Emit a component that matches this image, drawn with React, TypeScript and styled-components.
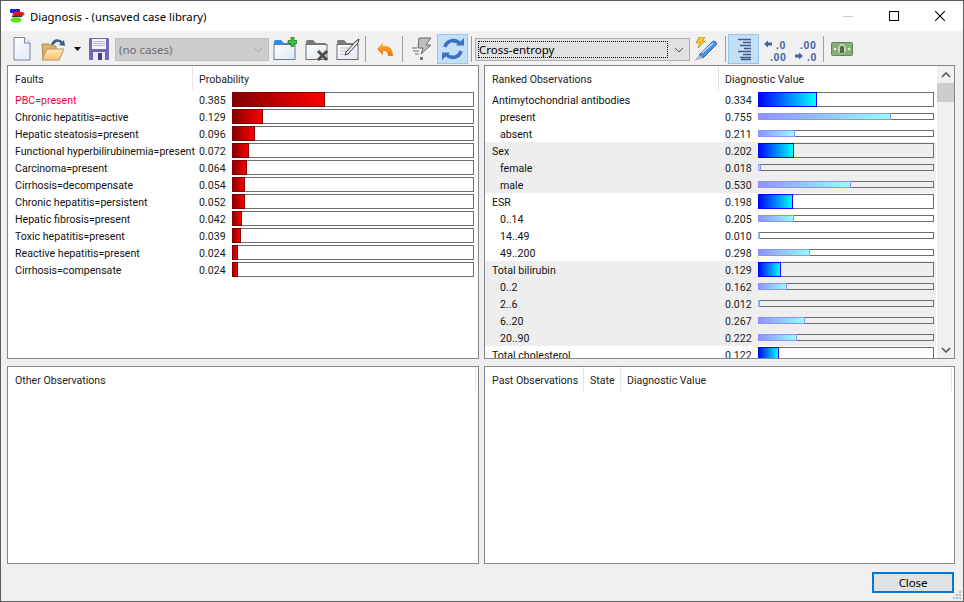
import React from 'react';
import styled, { createGlobalStyle } from 'styled-components';

interface Fault {
  label: string;
  value: number;
}

interface Observation {
  label: string;
  value: number;
  states: Fault[];
}

const faults: Fault[] = [
  { label: 'PBC=present', value: 0.385 },
  { label: 'Chronic hepatitis=active', value: 0.129 },
  { label: 'Hepatic steatosis=present', value: 0.096 },
  { label: 'Functional hyperbilirubinemia=present', value: 0.072 },
  { label: 'Carcinoma=present', value: 0.064 },
  { label: 'Cirrhosis=decompensate', value: 0.054 },
  { label: 'Chronic hepatitis=persistent', value: 0.052 },
  { label: 'Hepatic fibrosis=present', value: 0.042 },
  { label: 'Toxic hepatitis=present', value: 0.039 },
  { label: 'Reactive hepatitis=present', value: 0.024 },
  { label: 'Cirrhosis=compensate', value: 0.024 },
];

const observations: Observation[] = [
  {
    label: 'Antimytochondrial antibodies',
    value: 0.334,
    states: [
      { label: 'present', value: 0.755 },
      { label: 'absent', value: 0.211 },
    ],
  },
  {
    label: 'Sex',
    value: 0.202,
    states: [
      { label: 'female', value: 0.018 },
      { label: 'male', value: 0.53 },
    ],
  },
  {
    label: 'ESR',
    value: 0.198,
    states: [
      { label: '0..14', value: 0.205 },
      { label: '14..49', value: 0.01 },
      { label: '49..200', value: 0.298 },
    ],
  },
  {
    label: 'Total bilirubin',
    value: 0.129,
    states: [
      { label: '0..2', value: 0.162 },
      { label: '2..6', value: 0.012 },
      { label: '6..20', value: 0.267 },
      { label: '20..90', value: 0.222 },
    ],
  },
  { label: 'Total cholesterol', value: 0.122, states: [] },
];

const GlobalStyle = createGlobalStyle`
  html, body {
    margin: 0;
    padding: 0;
    background: #f0f0f0;
  }
  body {
    font-family: Roboto, "Noto Sans", sans-serif;
    font-size: 10.6px;
    color: #111;
  }
`;

const Window = styled.div`
  width: 964px;
  height: 602px;
  box-sizing: border-box;
  border: 1px solid #5c5c5c;
  background: #f0f0f0;
  display: flex;
  flex-direction: column;
  position: relative;
  overflow: hidden;
`;

const TitleBar = styled.div`
  height: 30px;
  background: #fff;
  display: flex;
  align-items: center;
  padding-left: 8px;
`;

const TitleText = styled.div`
  margin-left: 5px;
  font-family: "Noto Sans", sans-serif;
  font-size: 11.3px;
  color: #000;
  flex: 1;
`;

const WindowButton = styled.div`
  width: 46px;
  height: 30px;
  display: flex;
  align-items: center;
  justify-content: center;
`;

const Toolbar = styled.div`
  height: 34px;
  box-sizing: border-box;
  display: flex;
  align-items: center;
  padding: 2px 0 0 7px;
`;

const ToolButton = styled.div<{ $w: number; $active?: boolean }>`
  width: ${p => p.$w}px;
  height: 30px;
  box-sizing: border-box;
  flex: none;
  display: flex;
  align-items: center;
  justify-content: center;
  background: ${p => (p.$active ? '#c4dff6' : 'transparent')};
  border: 1px solid ${p => (p.$active ? '#90c8f6' : 'transparent')};
`;

const ToolSep = styled.div<{ $w: number }>`
  width: ${p => p.$w}px;
  height: 26px;
  flex: none;
  display: flex;
  justify-content: center;

  &:after {
    content: '';
    width: 1px;
    background: #a0a0a0;
  }
`;

const DisabledCombo = styled.div`
  width: 154px;
  height: 23px;
  margin: 1px 0 0 1px;
  box-sizing: border-box;
  flex: none;
  background: #cccccc;
  border: 1px solid #bfbfbf;
  color: #6d6d6d;
  font-family: "Noto Sans", sans-serif;
  font-size: 11.5px;
  display: flex;
  align-items: center;
  justify-content: space-between;
  padding: 0 5px 0 3px;
`;

const MethodCombo = styled.div`
  width: 215px;
  height: 23px;
  margin-top: 1px;
  box-sizing: border-box;
  flex: none;
  background: #e1e1e1;
  border: 1px solid #adadad;
  font-family: "Noto Sans", sans-serif;
  font-size: 11.5px;
  display: flex;
  align-items: center;
  padding: 2px 5px 2px 2px;
  color: #000;
`;

const FocusBox = styled.div`
  flex: 1;
  height: 100%;
  box-sizing: border-box;
  border: 1px dotted #000;
  display: flex;
  align-items: center;
  margin-right: 6px;
`;

const Panels = styled.div`
  display: grid;
  grid-template-columns: 472px 471px;
  grid-template-rows: 294px 198px;
  column-gap: 5px;
  row-gap: 7px;
  padding-left: 6px;
`;

const Panel = styled.div`
  box-sizing: border-box;
  background: #fff;
  border: 1px solid #82878f;
  display: flex;
  min-height: 0;
  overflow: hidden;
`;

const PanelBody = styled.div`
  flex: 1;
  min-width: 0;
  display: flex;
  flex-direction: column;
`;

const Header = styled.div`
  height: 25px;
  flex: none;
  display: flex;
`;

const HeaderCell = styled.div<{ $w?: number }>`
  box-sizing: border-box;
  width: ${p => (p.$w ? `${p.$w}px` : 'auto')};
  flex: ${p => (p.$w ? 'none' : '1')};
  height: 24px;
  display: flex;
  align-items: center;
  padding: 2px 0 0 6px;
  border-right: 1px solid #e5e5e5;
  white-space: nowrap;
  color: #222;

  &:first-child {
    padding-left: 7px;
  }

  &:last-child {
    border-right: none;
  }
`;

const Rows = styled.div`
  flex: 1;
  min-height: 0;
  overflow: hidden;
`;

const Row = styled.div<{ $leftCol: number; $shaded?: boolean }>`
  height: 17px;
  display: grid;
  grid-template-columns: ${p => p.$leftCol}px 33px 1fr;
  align-items: center;
  background: ${p => (p.$shaded ? '#eeeeee' : 'transparent')};
`;

const RowLabel = styled.div<{ $indent?: boolean; $hot?: boolean }>`
  padding: 2px 0 0 ${p => (p.$indent ? 15 : 7)}px;
  white-space: nowrap;
  color: ${p => (p.$hot ? '#f5003c' : '#111')};
`;

const RowValue = styled.div`
  padding-top: 2px;
  color: #222;
`;

const Track = styled.div<{ $w: number; $small?: boolean }>`
  width: ${p => p.$w}px;
  height: ${p => (p.$small ? 7 : 15)}px;
  box-sizing: border-box;
  border: 1px solid #6d6d6d;
`;

const Fill = styled.div<{ $kind: 'fault' | 'main' | 'sub' }>`
  height: calc(100% + 2px);
  margin: -1px 0 0 -1px;
  box-sizing: border-box;
  background: ${p =>
    p.$kind === 'fault'
      ? 'linear-gradient(to right, #800000, #ff0000)'
      : p.$kind === 'main'
        ? 'linear-gradient(to right, #0000ff, #00ffff)'
        : 'linear-gradient(to right, #9090ff, #90ffff)'};
  border: 1px solid ${p => (p.$kind === 'fault' ? '#800000' : p.$kind === 'main' ? '#0000ff' : '#9090ff')};
  border-left: none;
`;

const ScrollBar = styled.div`
  width: 17px;
  flex: none;
  margin-left: 1px;
  background: #f0f0f0;
  display: flex;
  flex-direction: column;
`;

const ScrollArrow = styled.div`
  height: 17px;
  flex: none;
  display: flex;
  align-items: center;
  justify-content: center;
`;

const ScrollTrack = styled.div`
  flex: 1;
`;

const ScrollThumb = styled.div`
  height: 19px;
  background: #cdcdcd;
`;

const Footer = styled.div`
  flex: 1;
  display: flex;
  justify-content: flex-end;
  align-items: flex-start;
  padding: 8px 9px 0 0;
`;

const CloseButton = styled.div`
  width: 82px;
  height: 21px;
  box-sizing: border-box;
  background: #e1e1e1;
  border: 2px solid #0078d7;
  display: flex;
  align-items: center;
  justify-content: center;
  color: #000;
  font-family: "Noto Sans", sans-serif;
  font-size: 11.5px;
  letter-spacing: -0.1px;
`;

const Grip = styled.svg`
  position: absolute;
  right: 1px;
  bottom: 1px;
`;

const AppIcon = () => (
  <svg width="16" height="15" viewBox="0 0 16 15">
    <rect x="1" y="0" width="10" height="4" rx="1" fill="#1a1ae0" />
    <ellipse cx="9.500" cy="5" rx="6" ry="2.400" fill="#e8141c" />
    <rect x="3" y="6.500" width="10" height="1.600" fill="#333" />
    <ellipse cx="7" cy="11" rx="5.500" ry="2.800" fill="#5fe01e" />
  </svg>
);

const MinIcon = () => (
  <svg width="10" height="10" viewBox="0 0 10 10">
    <rect x="0" y="5" width="10" height="1" fill="#c8c8c8" />
  </svg>
);

const MaxIcon = () => (
  <svg width="10" height="10" viewBox="0 0 10 10">
    <rect x="0.500" y="0.500" width="9" height="9" fill="none" stroke="#000" />
  </svg>
);

const CloseIcon = () => (
  <svg width="10" height="10" viewBox="0 0 10 10">
    <path d="M0 0L10 10M10 0L0 10" stroke="#000" strokeWidth="1.100" fill="none" />
  </svg>
);

const NewDocIcon = () => (
  <svg width="18" height="24" viewBox="0 0 18 24">
    <defs>
      <linearGradient id="docGrad" x1="0" y1="0" x2="1" y2="1">
        <stop offset="0" stopColor="#ffffff" />
        <stop offset="1" stopColor="#dfe8f7" />
      </linearGradient>
    </defs>
    <path d="M1 .5H11.500L17 6V23H1Z" fill="url(#docGrad)" stroke="#76849c" />
    <path d="M11.500 .5V6H17" fill="#f4f6fa" stroke="#76849c" />
  </svg>
);

const OpenIcon = () => (
  <svg width="25" height="24" viewBox="0 0 25 24">
    <defs>
      <linearGradient id="openGrad" x1="0" y1="0" x2="0" y2="1">
        <stop offset="0" stopColor="#ffecb8" />
        <stop offset="1" stopColor="#f6c272" />
      </linearGradient>
    </defs>
    <path d="M1 7H8L10 9H15V22H2Z" fill="#dfb469" stroke="#a98a55" />
    <path d="M6 12H23L18 23H1Z" fill="url(#openGrad)" stroke="#b8945c" />
    <path d="M11 8C13 3 18 2 21 6" fill="none" stroke="#3c5f88" strokeWidth="2.600" />
    <path d="M18 8L24 9L23 3Z" fill="#3c5f88" />
  </svg>
);

const DropCaret = () => (
  <svg width="7" height="4" viewBox="0 0 7 4">
    <path d="M0 0H7L3.500 4Z" fill="#111" />
  </svg>
);

const SaveIcon = () => (
  <svg width="20" height="22" viewBox="0 0 20 22">
    <rect x="0" y="0" width="20" height="22" rx="1" fill="#7268b8" />
    <rect x="3" y="1" width="14" height="10" fill="#f4f4fa" />
    <path d="M4 3.500H16M4 5.500H16M4 7.500H16" stroke="#b4b2d6" />
    <rect x="4" y="14" width="12" height="8" fill="#ebebf3" />
    <rect x="9" y="15" width="4" height="7" fill="#4a4080" />
  </svg>
);

const ChevronDown = ({ color }: { color: string }) => (
  <svg width="10" height="6" viewBox="0 0 10 6">
    <path d="M1 1L5 5L9 1" fill="none" stroke={color} strokeWidth="1" />
  </svg>
);

const FolderBase = ({ id, tab, edge }: { id: string; tab: string; edge: string }) => (
  <>
    <defs>
      <linearGradient id={id} x1="0" y1="0" x2="1" y2="1">
        <stop offset="0" stopColor="#ffffff" />
        <stop offset="1" stopColor="#dfe7f2" />
      </linearGradient>
    </defs>
    <path d="M1 4.500C1 3.500 2 3 3 3H8L11 6H21V9H1Z" fill={tab} />
    <rect x="1" y="7.500" width="21" height="15" fill={`url(#${id})`} stroke={edge} />
  </>
);

const NewFolderIcon = () => (
  <svg width="24" height="25" viewBox="0 0 24 25">
    <FolderBase id="fNew" tab="#2e8fe4" edge="#5a7ea8" />
    <path d="M15 3.500H18V.5H21V3.500H24V6.500H21V9.500H18V6.500H15Z" fill="#3fc43a" stroke="#1c7d24" strokeWidth=".8" />
  </svg>
);

const DeleteFolderIcon = () => (
  <svg width="24" height="25" viewBox="0 0 24 25">
    <FolderBase id="fDel" tab="#7b7b7b" edge="#6c6c6c" />
    <path d="M13 14L22 23M22 14L13 23" stroke="#4d4d4d" strokeWidth="3" fill="none" />
  </svg>
);

const EditFolderIcon = () => (
  <svg width="24" height="25" viewBox="0 0 24 25">
    <FolderBase id="fEdit" tab="#7b7b7b" edge="#6c6c6c" />
    <path d="M4 11H13M4 14H10M4 17H8" stroke="#bdbdbd" />
    <path d="M10 15L20 4L23 2L22 6L12 17L9 18Z" fill="#e8e8e8" stroke="#3d3d3d" />
  </svg>
);

const UndoIcon = () => (
  <svg width="16" height="13" viewBox="0 0 16 13">
    <defs>
      <linearGradient id="undoGrad" x1="0" y1="0" x2="0" y2="1">
        <stop offset="0" stopColor="#ffae3c" />
        <stop offset="1" stopColor="#e8760e" />
      </linearGradient>
    </defs>
    <path d="M0 6L6 0V3C12 2 16 6 16 13H11C11 10 10 8 6 8V12Z" fill="url(#undoGrad)" />
  </svg>
);

const BoltGreyIcon = () => (
  <svg width="21" height="24" viewBox="0 0 21 24">
    <path d="M8 1H20L15 8H20L10 17L12 11H7Z" fill="#bdbdbd" stroke="#6a6a6a" />
    <path d="M1 11H6M2 14H8M4 17H8" stroke="#6a6a6a" />
    <rect x="9" y="20" width="3" height="3" fill="#7a7a7a" />
  </svg>
);

const RefreshIcon = () => (
  <svg width="24" height="24" viewBox="0 0 24 24">
    <path d="M4 10A8.500 8.500 0 0 1 19 7" fill="none" stroke="#3b72c4" strokeWidth="3.600" />
    <path d="M15 8.500H23V1Z" fill="#3b72c4" />
    <path d="M20 14A8.500 8.500 0 0 1 5 17" fill="none" stroke="#3b72c4" strokeWidth="3.600" />
    <path d="M9 15.500H1V23Z" fill="#3b72c4" />
  </svg>
);

const PencilIcon = () => (
  <svg width="24" height="24" viewBox="0 0 24 24">
    <path d="M5 0H11L8.500 4H11L4 11L5.500 6H2Z" fill="#f5c62c" stroke="#a8821c" strokeWidth=".6" />
    <path d="M5 18L18 5C20 3 23 5 22.500 7.500L9 21Z" fill="#4a90e2" stroke="#2b62a8" />
    <path d="M8 16L19 6" stroke="#bfe0ff" strokeWidth="1.500" />
    <path d="M5 18L9 21L0 24Z" fill="#b9b9b9" />
  </svg>
);

const AlignIcon = () => (
  <svg width="16" height="23" viewBox="0 0 16 23">
    <path
      d="M2 1.500H15M7 4.500H15M4 7.500H15M8 10.500H15M2 13.500H15M7 16.500H15M4 19.500H15M5 21.500H15"
      stroke="#3f5b86"
      strokeWidth="1.600"
    />
  </svg>
);

const DecimalGlyph = styled.text`
  font-family: "Liberation Sans", sans-serif;
  font-size: 10.5px;
  font-weight: 700;
  letter-spacing: 0.6px;
  fill: #3f62a8;
`;

const DecreaseIcon = () => (
  <svg width="24" height="25" viewBox="0 0 24 25">
    <path d="M1 7L5 3.500V5.500H9V8.500H5V10.500Z" fill="#3f62a8" />
    <DecimalGlyph x="13" y="11.500">.0</DecimalGlyph>
    <DecimalGlyph x="7" y="23.500">.00</DecimalGlyph>
  </svg>
);

const IncreaseIcon = () => (
  <svg width="24" height="25" viewBox="0 0 24 25">
    <DecimalGlyph x="6" y="11.500">.00</DecimalGlyph>
    <path d="M9 19L5 15.500V17.500H1V20.500H5V22.500Z" fill="#3f62a8" />
    <DecimalGlyph x="13" y="23.500">.0</DecimalGlyph>
  </svg>
);

const MoneyIcon = () => (
  <svg width="22" height="14" viewBox="0 0 22 14">
    <rect x="0.500" y="0.500" width="21" height="13" rx="1" fill="#86ad78" stroke="#5d8a55" />
    <ellipse cx="11" cy="7" rx="4" ry="5" fill="#c4d8b8" />
    <path d="M9 11V6C9 3 13 3 13 6V11Z" fill="#4a6e42" />
    <circle cx="4" cy="7" r="1.300" fill="#e0ecd8" />
    <circle cx="18" cy="7" r="1.300" fill="#e0ecd8" />
  </svg>
);

const Grouped = ({ item, shaded }: { item: Observation; shaded: boolean }) => (
  <>
    <Row $leftCol={240} $shaded={shaded}>
      <RowLabel>{item.label}</RowLabel>
      <RowValue>{item.value.toFixed(3)}</RowValue>
      <Track $w={176}>
        <Fill $kind="main" style={{ width: Math.round(item.value * 176) }} />
      </Track>
    </Row>
    {item.states.map(state => (
      <Row key={state.label} $leftCol={240} $shaded={shaded}>
        <RowLabel $indent>{state.label}</RowLabel>
        <RowValue>{state.value.toFixed(3)}</RowValue>
        <Track $w={176} $small>
          <Fill $kind="sub" style={{ width: Math.round(state.value * 176) }} />
        </Track>
      </Row>
    ))}
  </>
);

const App: React.FC = () => {
  return (
    <Window>
      <GlobalStyle />
      <TitleBar>
        <AppIcon />
        <TitleText>Diagnosis - (unsaved case library)</TitleText>
        <WindowButton><MinIcon /></WindowButton>
        <WindowButton><MaxIcon /></WindowButton>
        <WindowButton><CloseIcon /></WindowButton>
      </TitleBar>
      <Toolbar>
        <ToolButton $w={28}><NewDocIcon /></ToolButton>
        <ToolButton $w={34}><OpenIcon /></ToolButton>
        <ToolButton $w={14}><DropCaret /></ToolButton>
        <ToolButton $w={30}><SaveIcon /></ToolButton>
        <DisabledCombo>
          (no cases)
          <ChevronDown color="#a8a8a8" />
        </DisabledCombo>
        <ToolButton $w={32}><NewFolderIcon /></ToolButton>
        <ToolButton $w={32}><DeleteFolderIcon /></ToolButton>
        <ToolButton $w={29}><EditFolderIcon /></ToolButton>
        <ToolSep $w={7} />
        <ToolButton $w={31}><UndoIcon /></ToolButton>
        <ToolSep $w={5} />
        <ToolButton $w={32}><BoltGreyIcon /></ToolButton>
        <ToolButton $w={31} $active><RefreshIcon /></ToolButton>
        <ToolSep $w={7} />
        <MethodCombo>
          <FocusBox>Cross-entropy</FocusBox>
          <ChevronDown color="#555" />
        </MethodCombo>
        <ToolButton $w={32}><PencilIcon /></ToolButton>
        <ToolSep $w={6} />
        <ToolButton $w={31} $active><AlignIcon /></ToolButton>
        <ToolButton $w={31}><DecreaseIcon /></ToolButton>
        <ToolButton $w={31}><IncreaseIcon /></ToolButton>
        <ToolSep $w={5} />
        <ToolButton $w={32}><MoneyIcon /></ToolButton>
      </Toolbar>
      <Panels>
        <Panel>
          <PanelBody>
            <Header>
              <HeaderCell $w={185}>Faults</HeaderCell>
              <HeaderCell>Probability</HeaderCell>
            </Header>
            <Rows>
              {faults.map((fault, index) => (
                <Row key={fault.label} $leftCol={191}>
                  <RowLabel $hot={index === 0}>{fault.label}</RowLabel>
                  <RowValue>{fault.value.toFixed(3)}</RowValue>
                  <Track $w={242}>
                    <Fill $kind="fault" style={{ width: Math.round(fault.value * 242) }} />
                  </Track>
                </Row>
              ))}
            </Rows>
          </PanelBody>
        </Panel>
        <Panel>
          <PanelBody>
            <Header>
              <HeaderCell $w={234}>Ranked Observations</HeaderCell>
              <HeaderCell>Diagnostic Value</HeaderCell>
            </Header>
            <Rows>
              {observations.map((item, index) => (
                <Grouped key={item.label} item={item} shaded={index % 2 === 1} />
              ))}
            </Rows>
          </PanelBody>
          <ScrollBar>
            <ScrollArrow>
              <svg width="10" height="6" viewBox="0 0 10 6">
                <path d="M1 5L5 1L9 5" fill="none" stroke="#555" strokeWidth="1.600" />
              </svg>
            </ScrollArrow>
            <ScrollThumb />
            <ScrollTrack />
            <ScrollArrow>
              <svg width="10" height="6" viewBox="0 0 10 6">
                <path d="M1 1L5 5L9 1" fill="none" stroke="#555" strokeWidth="1.600" />
              </svg>
            </ScrollArrow>
          </ScrollBar>
        </Panel>
        <Panel>
          <PanelBody>
            <Header>
              <HeaderCell $w={468}>Other Observations</HeaderCell>
              <HeaderCell />
            </Header>
          </PanelBody>
        </Panel>
        <Panel>
          <PanelBody>
            <Header>
              <HeaderCell $w={99}>Past Observations</HeaderCell>
              <HeaderCell $w={37}>State</HeaderCell>
              <HeaderCell $w={331}>Diagnostic Value</HeaderCell>
              <HeaderCell />
            </Header>
          </PanelBody>
        </Panel>
      </Panels>
      <Footer>
        <CloseButton>Close</CloseButton>
      </Footer>
      <Grip width="10" height="10" viewBox="0 0 10 10">
        <path d="M7 1h2v2H7zM4 4h2v2H4zM7 4h2v2H7zM1 7h2v2H1zM4 7h2v2H4zM7 7h2v2H7z" fill="#b8b8b8" />
      </Grip>
    </Window>
  );
};

export default App;
